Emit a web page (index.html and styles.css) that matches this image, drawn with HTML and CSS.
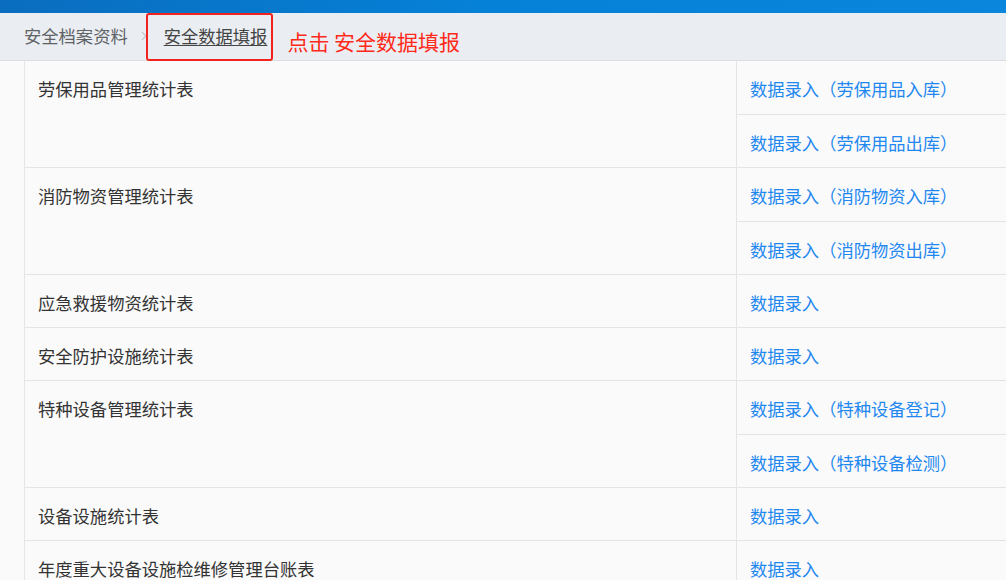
FILE: index.html
```html
<!doctype html>
<html>
<head>
<meta charset="utf-8">
<title>安全数据填报</title>
<link rel="stylesheet" href="styles.css">
</head>
<body>
	<div class="topbar"></div>
	<div class="crumbs">
		<span class="crumb">安全档案资料</span>
		<svg class="sep" width="6" height="10" viewBox="0 0 6 10"><path d="M1 1 L5 5 L1 9" fill="none" stroke="#c3c7cd" stroke-width="1.2"/></svg>
		<span class="crumb current">安全数据填报<span class="mark"></span></span>
		<span class="note">点击 安全数据填报</span>
	</div>
	<div class="sheet">
		<div class="group">
			<div class="name">劳保用品管理统计表</div>
			<div class="entries">
				<div class="entry"><a href="#">数据录入（劳保用品入库）</a></div>
				<div class="entry"><a href="#">数据录入（劳保用品出库）</a></div>
			</div>
		</div>
		<div class="group">
			<div class="name">消防物资管理统计表</div>
			<div class="entries">
				<div class="entry"><a href="#">数据录入（消防物资入库）</a></div>
				<div class="entry"><a href="#">数据录入（消防物资出库）</a></div>
			</div>
		</div>
		<div class="group">
			<div class="name">应急救援物资统计表</div>
			<div class="entries">
				<div class="entry"><a href="#">数据录入</a></div>
			</div>
		</div>
		<div class="group">
			<div class="name">安全防护设施统计表</div>
			<div class="entries">
				<div class="entry"><a href="#">数据录入</a></div>
			</div>
		</div>
		<div class="group">
			<div class="name">特种设备管理统计表</div>
			<div class="entries">
				<div class="entry"><a href="#">数据录入（特种设备登记）</a></div>
				<div class="entry"><a href="#">数据录入（特种设备检测）</a></div>
			</div>
		</div>
		<div class="group">
			<div class="name">设备设施统计表</div>
			<div class="entries">
				<div class="entry"><a href="#">数据录入</a></div>
			</div>
		</div>
		<div class="group">
			<div class="name">年度重大设备设施检维修管理台账表</div>
			<div class="entries">
				<div class="entry"><a href="#">数据录入</a></div>
			</div>
		</div>
	</div>
</body>
</html>
```
FILE: styles.css
```css
* {margin: 0; padding: 0; box-sizing: border-box;}
html, body {
  width: 1006px;
  height: 580px;
  overflow: hidden;
}
body {
  background: #fafafa;
  font-family: "Noto Sans CJK SC", "Noto Sans", sans-serif;
  font-size: 17.3px;
  color: #333;
}
.topbar {
  height: 13px;
  background: linear-gradient(to right, #0a6dbf, #0582d8 50%, #0a86dc);
}
.crumbs {
  height: 48px;
  background: #eaeef2;
  border-bottom: 1px solid #dadee3;
  display: flex;
  align-items: center;
  padding: 0 0 2px 24px;
}
.crumb {
  color: #606266;
  position: relative;
}
.crumb.current {
  color: #444;
  text-decoration: underline;
  text-decoration-thickness: 1px;
  text-underline-offset: 2px;
}
.sep {
  margin: 0 17px 0 13px;
}
.mark {
  position: absolute;
  left: -18px;
  right: -6px;
  top: -10px;
  height: 48px;
  border: 2.5px solid #f2231c;
  border-radius: 3px;
}
.note {
  margin-left: 20px;
  margin-top: 10px;
  color: #ff2a1a;
  font-size: 21px;
}
.sheet {
  margin-left: 24px;
  width: 1100px;
  border-left: 1px solid #e6e6e6;
}
.group {
  display: flex;
  border-bottom: 1px solid #e3e4e8;
}
.name {
  width: 712px;
  padding: 16px 13px 12px;
  line-height: 24px;
  border-right: 1px solid #e3e4e8;
}
.entries {
  flex: 1;
}
.entry {
  height: 52px;
  padding: 16px 13px 12px;
  line-height: 24px;
}
.entry:first-child:not(:last-child) {
  height: 53px;
}
.entry + .entry {
  height: 53px;
  border-top: 1px solid #e3e4e8;
}
.entry a {
  color: #1f88f0;
  text-decoration: none;
}
```
